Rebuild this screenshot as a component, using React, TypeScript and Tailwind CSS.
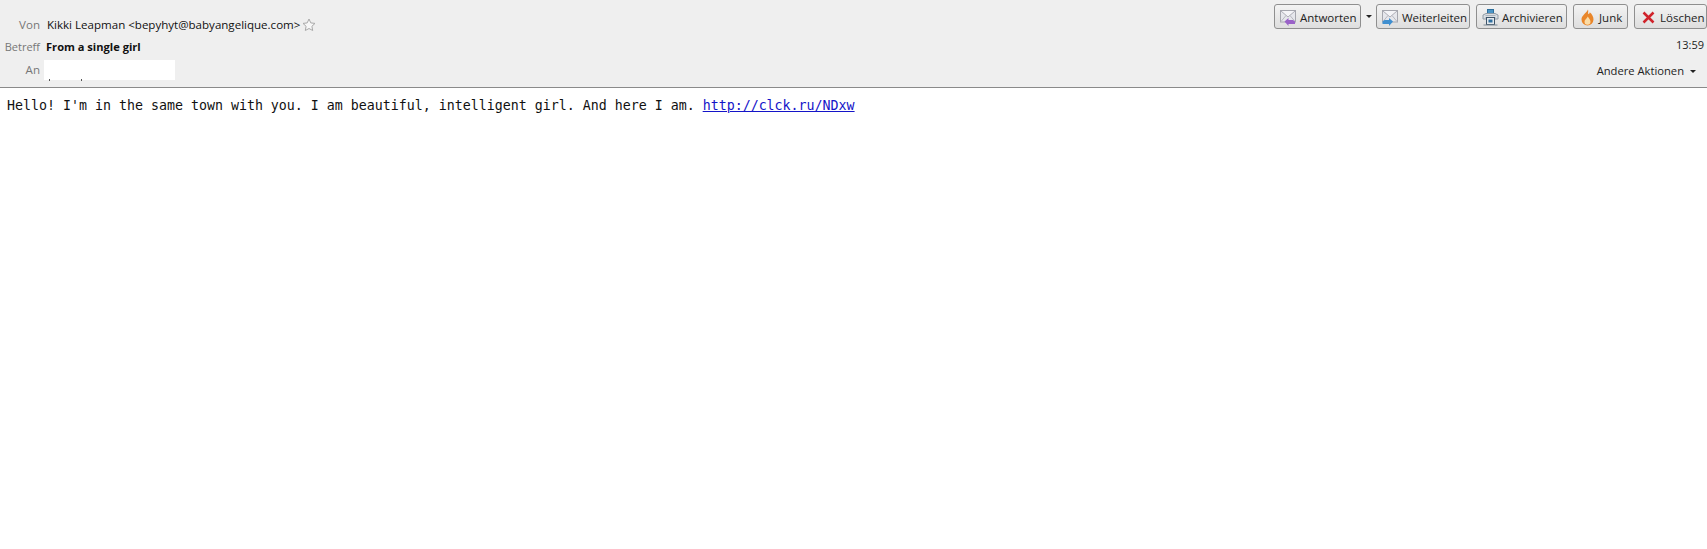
const ui = "font-['Open_Sans','Noto_Sans',sans-serif]";

function Envelope({ color, reply }: { color: string; reply?: boolean }) {
  return (
    <svg width="18" height="17" viewBox="0 0 18 17">
      <rect x="1.500" y="1.500" width="15" height="11.500" fill="#e6e7ec" stroke="#a5a6ae" />
      <path d="M2 2l7 6 7-6" fill="#f4f4f7" stroke="#adaeb6" />
      <path d="M2 12.500l5-6M16 12.500l-5-6" fill="none" stroke="#b8b9c0" />
      {reply ? (
        <path d="M5.500 12.500l4-3.500v2h4.500l2 1.500v2.500h-6.500v2z" fill={color} />
      ) : (
        <path d="M12 12.500l-4-3.500v2H3.500l-2 1.500v2.500H8v2z" fill={color} />
      )}
    </svg>
  );
}

function ArchiveIcon() {
  return (
    <svg width="17" height="17" viewBox="0 0 17 17">
      <rect x="5.500" y="0.500" width="6" height="5" fill="#4a94c6" stroke="#2d6f9c" />
      <path d="M1 10V6l3-1.500h9L16 6v4z" fill="#d9dee3" stroke="#8f9aa4" />
      <path d="M3.500 6.500h10M3.500 8.500h10" stroke="#aab4bd" />
      <rect x="4.500" y="8.500" width="8" height="7" fill="#e4e9ed" stroke="#3e5469" />
      <rect x="6.500" y="10.500" width="4" height="3" fill="#2f6f9f" />
      <path d="M1.500 16h14" stroke="#7d8a96" />
    </svg>
  );
}

function FlameIcon() {
  return (
    <svg width="13" height="17" viewBox="0 0 13 17">
      <path d="M7 .5c.8 2.500-.6 3.500.6 4.800.9-.5 1.100-1.200 1.100-2 2.500 2 3.800 4.700 3.800 7.300A6 6 0 0 1 6.500 16.500 6 6 0 0 1 .5 10.500C.5 6.500 5 4.500 7 .5z" fill="#e9862a" />
      <path d="M6.800 7.500c.9 2 2.700 3 2.700 5.200a3 3 0 0 1-6 0C3.500 10.700 5.800 9.800 6.800 7.500z" fill="#fbdca6" />
    </svg>
  );
}

function CrossIcon() {
  return (
    <svg width="13" height="13" viewBox="0 0 13 13">
      <path d="M1.500 1.500l10 10M11.500 1.500l-10 10" stroke="#d0232b" strokeWidth="2.500" fill="none" />
    </svg>
  );
}

function Btn({ icon, label, width, className = "" }: { icon: React.ReactNode; label: string; width: string; className?: string }) {
  return (
    <div className={`flex h-[25px] ${width} ${className} shrink-0 items-center gap-[3px] rounded-[3px] border border-[#8f8f8f] bg-gradient-to-b from-[#f3f3f3] to-[#dedede] pl-[4px] text-[11.5px] text-[#222]`}>
      <span className="flex w-[18px] shrink-0 items-center justify-center pt-[2px]">{icon}</span>
      <span className="whitespace-nowrap pt-[2px]">{label}</span>
    </div>
  );
}

function Caret({ className = "" }: { className?: string }) {
  return <span className={`inline-block h-0 w-0 border-x-[3px] border-t-[3px] border-x-transparent border-t-[#222] ${className}`} />;
}

export default function App() {
  return (
    <div className={`flex h-[549px] w-[1707px] flex-col overflow-hidden bg-white ${ui}`}>
      <header className="flex h-[88px] shrink-0 justify-between border-b border-[#8a8a8a] bg-[#efefef]">
        <div className="flex flex-col pt-[15px] text-[11.55px] leading-[20px]">
          <div className="flex h-[20px] items-center">
            <span className="w-[40px] text-right text-[#777]">Von</span>
            <span className="ml-[7px] whitespace-nowrap text-[#111]">Kikki Leapman &lt;bepyhyt@babyangelique.com&gt;</span>
            <svg width="14" height="14" viewBox="0 0 14 14" className="mb-[1px] ml-[2px]">
              <path d="M7 1l1.800 3.900 4.200.5-3.100 2.900.8 4.200L7 10.500l-3.700 2 .8-4.200L1 5.400l4.200-.5z" fill="#f7f7f7" stroke="#a9a9a9" />
            </svg>
          </div>
          <div className="mt-[2px] flex h-[20px] items-center">
            <span className="w-[40px] text-right text-[11px] text-[#777]">Betreff</span>
            <span className="ml-[6px] whitespace-nowrap text-[11.1px] font-bold text-[#111]">From a single girl</span>
          </div>
          <div className="mt-[3px] flex h-[20px] items-center">
            <span className="w-[40px] text-right text-[#777]">An</span>
            <div className="relative ml-[4px] h-[20px] w-[131px] bg-white">
              <span className="absolute left-[5px] top-[19px] h-[2px] w-[1px] bg-[#555]" />
              <span className="absolute left-[37px] top-[19px] h-[2px] w-[1px] bg-[#555]" />
            </div>
          </div>
        </div>
        <div className="flex flex-col items-end pt-[4px] text-[11.5px] text-[#222]">
          <div className="flex items-center">
            <Btn width="w-[87px]" label="Antworten" icon={<Envelope color="#9a62c8" reply />} />
            <Caret className="ml-[5px] mr-[4px]" />
            <Btn width="w-[94px]" label="Weiterleiten" icon={<Envelope color="#3f8fd0" />} />
            <Btn className="ml-[6px]" width="w-[91px]" label="Archivieren" icon={<ArchiveIcon />} />
            <Btn className="ml-[6px]" width="w-[55px]" label="Junk" icon={<FlameIcon />} />
            <Btn className="ml-[6px]" width="w-[73px]" label="Löschen" icon={<CrossIcon />} />
          </div>
          <div className="mt-[8px] pr-[3px] text-[11px] leading-[16px]">13:59</div>
          <div className="mt-[10px] flex items-center gap-[6px] pr-[11px] text-[11.2px] leading-[16px]">
            <span>Andere Aktionen</span>
            <Caret />
          </div>
        </div>
      </header>
      <main className="pl-[7px] pt-[10px] font-['DejaVu_Sans_Mono',monospace] text-[13.29px] leading-[16px] text-[#111]">
        Hello! I'm in the same town with you. I am beautiful, intelligent girl. And here I am.{" "}
        <a className="text-[#1414c8] underline" href="#">http://clck.ru/NDxw</a>
      </main>
    </div>
  );
}
